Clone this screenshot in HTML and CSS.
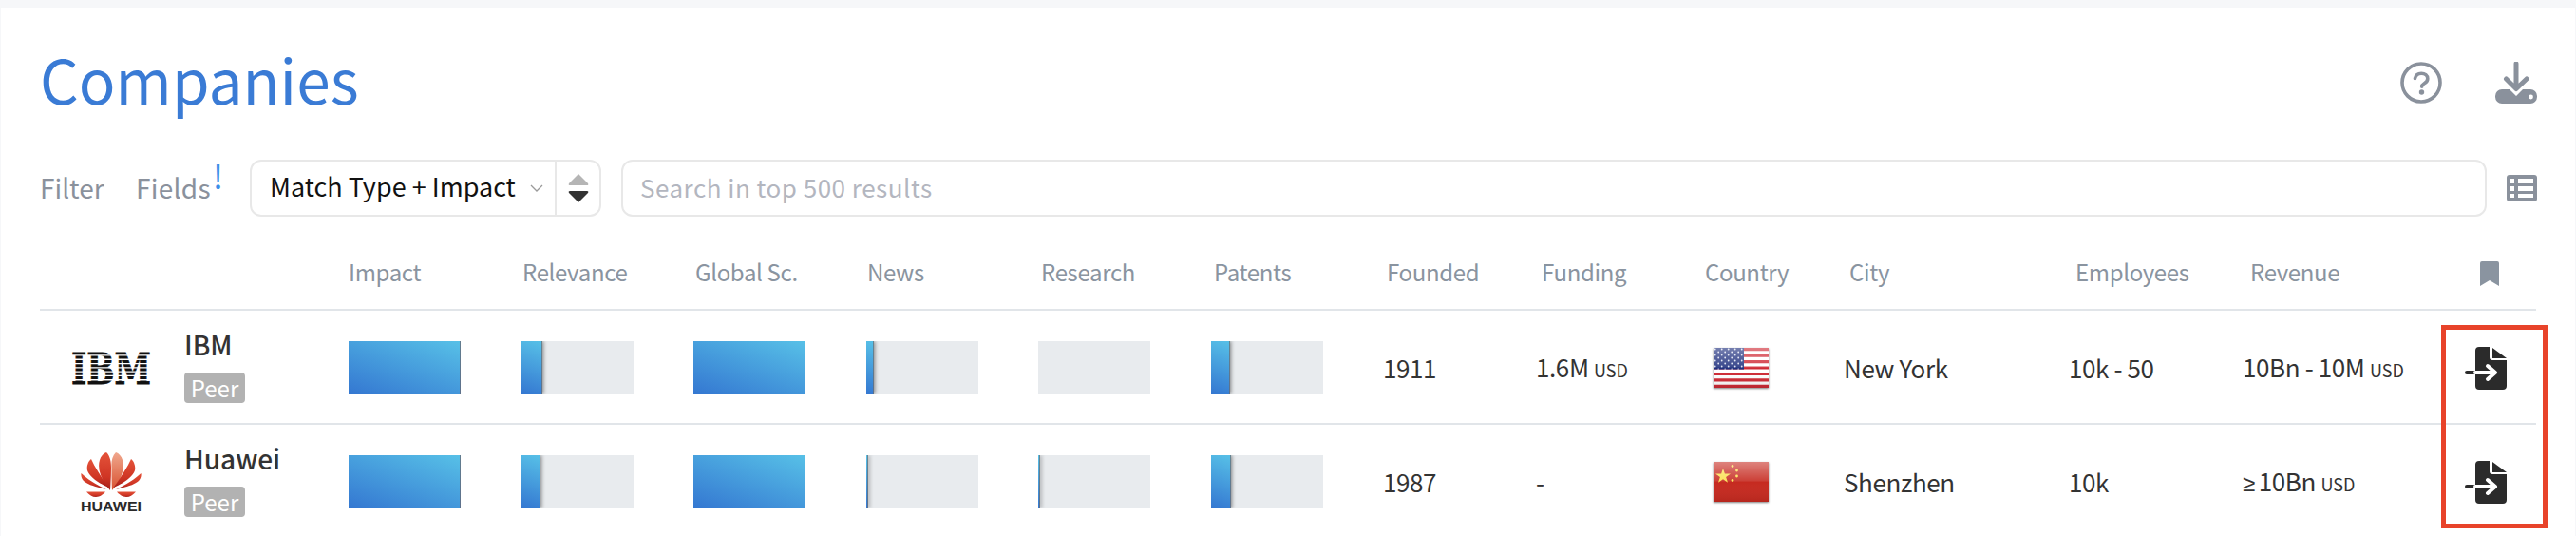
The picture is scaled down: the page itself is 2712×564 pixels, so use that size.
FILE: index.html
```html
<!DOCTYPE html>
<html lang="en">
<head>
<meta charset="utf-8">
<title>Companies</title>
<link rel="stylesheet" href="styles.css">
</head>
<body>
<main class="card">
  <header class="title-row">
    <h1 class="title">Companies</h1>
    <div class="title-actions">
      <svg class="icon-help" viewBox="0 0 44 44" width="44" height="44"><circle cx="22" cy="22" r="20" fill="none" stroke="currentColor" stroke-width="3.6"/><path d="M15.5 17.5c.6-3.4 3.4-5.300 6.700-5.300 3.700 0 6.600 2.300 6.600 5.500 0 2.700-1.700 4-3.500 5.100-1.600 1-2.600 1.600-2.600 3.400" fill="none" stroke="currentColor" stroke-width="3.6" stroke-linecap="round"/><circle cx="22.500" cy="32" r="2.700" fill="currentColor"/></svg>
      <svg class="icon-download" viewBox="0 0 44 44" width="44" height="44"><path d="M22 2v25M11.500 18 22 28.500 33 18" fill="none" stroke="currentColor" stroke-width="5" stroke-linecap="round" stroke-linejoin="round"/><path d="M7 29h8L22 36l7-7h8a7 7 0 0 1 7 7v1a7 7 0 0 1-7 7H7a7 7 0 0 1-7-7v-1a7 7 0 0 1 7-7z" fill="currentColor"/><circle cx="37.500" cy="37" r="2.400" fill="#fff"/></svg>
    </div>
  </header>

  <section class="toolbar">
    <span class="tool-link tool-filter">Filter</span>
    <span class="tool-link tool-fields">Fields<sup class="bang">!</sup></span>
    <div class="sort">
      <div class="sort-value">
        <span class="sort-text">Match Type + Impact</span>
        <svg class="chevron" viewBox="0 0 14 8" width="14" height="8"><path d="M1 1l6 6 6-6" fill="none" stroke="#9a9a9a" stroke-width="1.300"/></svg>
      </div>
      <div class="sort-steps">
        <svg viewBox="0 0 22 30" width="22" height="30"><path d="M11 0 21 10q1 2-1 2H2q-2 0-1-2z" fill="#b5b5b5"/><path d="M11 30 21 20q1-2-1-2H2q-2 0-1 2z" fill="#333"/></svg>
      </div>
    </div>
    <input class="search" type="text" placeholder="Search in top 500 results">
    <svg class="icon-table" viewBox="0 0 32 28" width="32" height="28"><rect width="32" height="28" rx="3" fill="currentColor"/><path d="M4 4h4v5H4zM12 4h16v5H12zM4 12h4v5H4zM12 12h16v5H12zM4 20h4v4H4zM12 20h16v4H12z" fill="#fff"/></svg>
  </section>

  <div class="head-row">
    <span>Impact</span><span>Relevance</span><span>Global Sc.</span><span>News</span><span>Research</span><span>Patents</span><span>Founded</span><span>Funding</span><span>Country</span><span>City</span><span>Employees</span><span>Revenue</span>
    <svg class="icon-bookmark" viewBox="0 0 20 26" width="20" height="26"><path d="M2 0h16a2 2 0 0 1 2 2v24l-10-6-10 6V2a2 2 0 0 1 2-2z" fill="currentColor"/></svg>
  </div>

  <div class="row">
    <div class="logo">
      <svg class="logo-ibm" viewBox="0 0 84 34" width="84" height="34"><text x="0" y="34" textLength="84" lengthAdjust="spacingAndGlyphs" class="ibm-text">IBM</text><path d="M0 3.300h84v1.300H0zM0 7.600h84v1.300H0zM0 11.900h84v1.300H0zM0 16.200h84v1.300H0zM0 20.500h84v1.300H0zM0 24.800h84v1.300H0zM0 29.100h84v1.300H0z" fill="#fff"/></svg>
    </div>
    <div class="name"><strong>IBM</strong><span class="badge">Peer</span></div>
    <div class="bar"><i style="width:100%"></i></div>
    <div class="bar"><i style="width:19%"></i></div>
    <div class="bar"><i style="width:100%"></i></div>
    <div class="bar"><i style="width:7%"></i></div>
    <div class="bar"></div>
    <div class="bar"><i style="width:17%"></i></div>
    <div class="val">1911</div>
    <div class="val val-funding">1.6M <small>USD</small></div>
    <div class="flag">
      <svg viewBox="0 0 58 42" width="58" height="42">
        <defs>
          <pattern id="stars" width="7" height="6" patternUnits="userSpaceOnUse"><circle cx="1.700" cy="1.500" r=".9" fill="#dfe3f2"/><circle cx="5.200" cy="4.500" r=".9" fill="#dfe3f2"/></pattern>
          <linearGradient id="gloss" x1="0" y1="0" x2="0" y2="1"><stop offset="0" stop-color="#fff" stop-opacity=".38"/><stop offset=".48" stop-color="#fff" stop-opacity=".12"/><stop offset=".5" stop-color="#fff" stop-opacity="0"/><stop offset="1" stop-color="#000" stop-opacity=".1"/></linearGradient>
        </defs>
        <rect width="58" height="42" fill="#fff"/>
        <path d="M0 0h58v3.200H0zM0 6.500h58v3.200H0zM0 13h58v3.200H0zM0 19.400h58v3.200H0zM0 25.900h58v3.200H0zM0 32.300h58v3.200H0zM0 38.800h58V42H0z" fill="#cf2a35"/>
        <rect width="32" height="22.600" fill="#20307e"/>
        <rect width="32" height="22.600" fill="url(#stars)"/>
        <rect width="58" height="42" fill="url(#gloss)"/>
      </svg>
    </div>
    <div class="val">New York</div>
    <div class="val">10k - 50</div>
    <div class="val">10Bn - 10M <small>USD</small></div>
    <svg class="icon-file" viewBox="0 0 44 45" width="44" height="45"><path d="M15 0h11v11a3 3 0 0 0 3 3h15v27a4 4 0 0 1-4 4H15a4 4 0 0 1-4-4V4a4 4 0 0 1 4-4z" fill="#2b2b2b"/><path d="M29 1l15 11H29z" fill="#2b2b2b"/><path d="M2 27h9" stroke="#2b2b2b" stroke-width="4" stroke-linecap="round"/><path d="M11 27h20M24 20l8 7-8 7" fill="none" stroke="#fff" stroke-width="4" stroke-linecap="round" stroke-linejoin="round"/></svg>
  </div>

  <div class="row">
    <div class="logo">
      <svg class="logo-huawei" viewBox="0 0 64 62" width="64" height="62">
        <defs>
          <linearGradient id="pet" x1="0" y1="0" x2="0" y2="1"><stop offset="0" stop-color="#e4533a"/><stop offset=".65" stop-color="#cf3524"/><stop offset="1" stop-color="#a3201a"/></linearGradient>
          <linearGradient id="pet-top" x1="0" y1="0" x2="0" y2="1"><stop offset="0" stop-color="#f0a88e"/><stop offset="1" stop-color="#d8502f"/></linearGradient>
          <g id="petals-side">
            <path d="M29.500 37C20 33 9 26 7 19 6 15 8 9 11 7 15 16 23 28 29.500 37z"/>
            <path d="M27 39C18 37 7 34 3 30 1 28 0 25 .5 22 8 29 18 35 27 39z"/>
            <path d="M26 41.500H6C9 45 12 47 16 47 20 47 24 44 26 41.500z"/>
          </g>
        </defs>
        <path d="M31 40C22 30 17 18 20 8 21 4 24 1 27 0 31 4 32 10 32 16 32 24 31.500 32 31 40z" fill="url(#pet)"/>
        <path d="M33 40C42 30 47 18 44 8 43 4 40 1 37 0 33 4 32 10 32.500 16 32.500 24 32.500 32 33 40z" fill="url(#pet-top)"/>
        <use href="#petals-side" fill="url(#pet)"/>
        <use href="#petals-side" fill="url(#pet)" transform="matrix(-1 0 0 1 64 0)"/>
        <text x="0" y="61.500" textLength="64" lengthAdjust="spacingAndGlyphs" class="huawei-text">HUAWEI</text>
      </svg>
    </div>
    <div class="name"><strong>Huawei</strong><span class="badge">Peer</span></div>
    <div class="bar"><i style="width:100%"></i></div>
    <div class="bar"><i style="width:17%"></i></div>
    <div class="bar"><i style="width:100%"></i></div>
    <div class="bar"><i style="width:2%"></i></div>
    <div class="bar"><i style="width:1.500%"></i></div>
    <div class="bar"><i style="width:18%"></i></div>
    <div class="val">1987</div>
    <div class="val val-funding">-</div>
    <div class="flag">
      <svg viewBox="0 0 58 42" width="58" height="42">
        <defs><linearGradient id="gloss2" x1="0" y1="0" x2="0" y2="1"><stop offset="0" stop-color="#fff" stop-opacity=".42"/><stop offset=".48" stop-color="#fff" stop-opacity=".1"/><stop offset=".5" stop-color="#fff" stop-opacity="0"/><stop offset="1" stop-color="#000" stop-opacity=".08"/></linearGradient></defs>
        <rect width="58" height="42" fill="#c62a20"/>
        <path d="M10 7l1.900 5.600H18l-4.900 3.500 1.900 5.700-5-3.500-5 3.500 1.900-5.700L2 12.600h6.100z" fill="#fbe14e"/>
        <circle cx="20" cy="4.500" r="1.400" fill="#fbe14e"/><circle cx="24.500" cy="9" r="1.400" fill="#fbe14e"/><circle cx="24.500" cy="15" r="1.400" fill="#fbe14e"/><circle cx="20" cy="19.500" r="1.400" fill="#fbe14e"/>
        <rect width="58" height="42" fill="url(#gloss2)"/>
      </svg>
    </div>
    <div class="val">Shenzhen</div>
    <div class="val">10k</div>
    <div class="val"><span class="ge">≥</span>10Bn <small>USD</small></div>
    <svg class="icon-file" viewBox="0 0 44 45" width="44" height="45"><path d="M15 0h11v11a3 3 0 0 0 3 3h15v27a4 4 0 0 1-4 4H15a4 4 0 0 1-4-4V4a4 4 0 0 1 4-4z" fill="#2b2b2b"/><path d="M29 1l15 11H29z" fill="#2b2b2b"/><path d="M2 27h9" stroke="#2b2b2b" stroke-width="4" stroke-linecap="round"/><path d="M11 27h20M24 20l8 7-8 7" fill="none" stroke="#fff" stroke-width="4" stroke-linecap="round" stroke-linejoin="round"/></svg>
  </div>

  <div class="highlight"></div>
</main>
</body>
</html>
```
FILE: styles.css
```css
* { box-sizing: border-box; }
html, body { margin: 0; height: 564px; overflow: hidden; }
body {
  background: #f6f7f9;
  font-family: "Noto Sans CJK SC", "Noto Sans", sans-serif;
  color: #333;
}
.card {
  position: relative;
  margin: 8px 1px 0;
  height: 556px;
  padding: 0 40px 0 41px;
  background: #fff;
}
.title-row {
  display: flex;
  align-items: center;
  justify-content: space-between;
  height: 160px;
  padding: 41px 0 43px;
}
.title {
  margin: 0;
  font-size: 64px;
  font-weight: 400;
  line-height: 76px;
  color: #3a7bd5;
  position: relative;
  top: -5px;
}
.title-actions { display: flex; align-items: center; gap: 56px; color: #8a919c; }
.toolbar {
  display: flex;
  align-items: center;
  height: 60px;
  color: #8a919c;
}
.tool-link { font-size: 28px; line-height: 40px; padding-bottom: 3px; }
.tool-filter { width: 101px; }
.tool-fields { width: 120px; letter-spacing: .3px; }
.bang {
  font-size: 34px;
  line-height: 0;
  color: #3b8de8;
  vertical-align: 10px;
  margin-left: 2px;
}
.sort {
  display: flex;
  width: 370px;
  height: 60px;
  border: 2px solid #e8e8e8;
  border-radius: 12px;
}
.sort-value {
  flex: 1;
  display: flex;
  align-items: center;
  justify-content: space-between;
  padding: 0 12px 0 19px;
  border-right: 2px solid #e8e8e8;
  color: #111;
}
.sort-text { font-size: 27px; line-height: 36px; padding-bottom: 4px; }
.sort-steps {
  width: 45px;
  display: flex;
  align-items: center;
  justify-content: center;
}
.search {
  flex: 1;
  height: 60px;
  margin: 0 21px;
  padding: 0 18px 3px;
  border: 2px solid #e8e8e8;
  border-radius: 12px;
  outline: none;
  font: 26px "Noto Sans CJK SC", "Noto Sans", sans-serif;
  letter-spacing: .5px;
}
.search::placeholder { color: #b3b6bf; }
.head-row {
  display: grid;
  grid-template-columns: 183px 182px 181px 183px 182px 182px 163px 172px 152px 238px 184px 242px 20px;
  align-items: end;
  height: 97px;
  padding: 0 0 22px 325px;
  margin-right: 1px;
  color: #8a94a0;
  font-size: 24px;
  line-height: 34px;
  letter-spacing: -.35px;
}
.icon-bookmark { margin-bottom: 2px; }
.row {
  display: grid;
  grid-template-columns: 152px 173px repeat(6, 181.500px) 162px 186px 137px 237px 183px 234px 44px;
  align-items: center;
  height: 120px;
  padding-top: 2px;
  margin-right: 1px;
  border-top: 2px solid #e1e5e9;
}
.logo { display: flex; justify-content: center; width: 152px; padding-right: 2px; }
.logo svg { overflow: visible; }
.ibm-text { font: 700 44px "DejaVu Serif", serif; fill: #111; stroke: #111; stroke-width: .8px; }
.huawei-text { font: 700 14px "Liberation Sans", sans-serif; fill: #2a2a2a; }
.name { display: flex; flex-direction: column; align-items: flex-start; gap: 13px; margin-bottom: 5px; }
.name strong { font-size: 28px; font-weight: 500; line-height: 34px; color: #333; }
.badge {
  height: 32px;
  width: 64px;
  text-align: center;
  border-radius: 4px;
  background: #b2b2b2;
  color: #fff;
  font-size: 24px;
  line-height: 31px;
}
.bar {
  width: 118px;
  height: 56px;
  background: #e8ebee;
  display: flex;
  overflow: hidden;
}
.bar i {
  display: block;
  height: 100%;
  background: linear-gradient(20deg, #3477d1 0%, #57c0e7 100%);
  border-right: 1px solid rgba(110, 110, 110, .7);
  box-shadow: 1px 0 4px rgba(0, 0, 0, .45);
}
.val { font-size: 26px; line-height: 36px; color: #333; white-space: nowrap; letter-spacing: -.4px; }
.val-funding { margin-left: -1px; }
.val small { font-size: 18px; text-transform: uppercase; letter-spacing: 0; }
.ge { font-family: "Noto Sans", sans-serif; font-size: 24px; margin-right: 4px; }
.flag { display: flex; }
.flag svg { box-shadow: 0 1px 2px rgba(0, 0, 0, .5); }
.highlight {
  position: absolute;
  left: 2569px;
  top: 334px;
  width: 112px;
  height: 214px;
  border: 5px solid #e8432a;
  pointer-events: none;
}
```
